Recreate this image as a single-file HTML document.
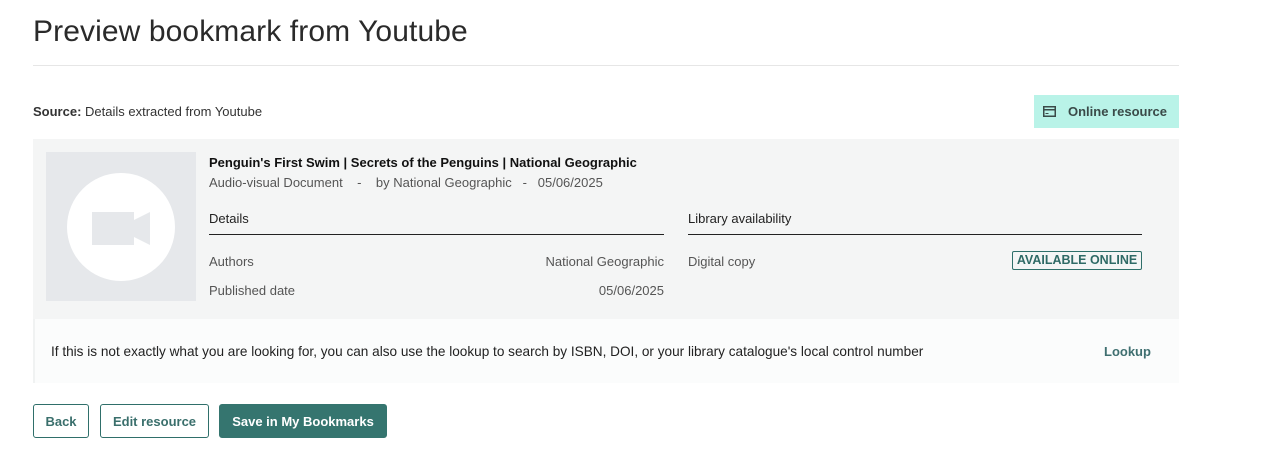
<!DOCTYPE html>
<html><head><style>
body{margin:0;width:1264px;height:473px;background:#fff;font-family:"Liberation Sans",sans-serif;color:#333;position:relative;overflow:hidden}
.a{position:absolute;white-space:nowrap}
h1{position:absolute;left:33px;top:15px;margin:0;font-weight:normal;font-size:30px;color:#2a2a2a;letter-spacing:0.1px}
.btn{position:absolute;top:404px;height:34px;box-sizing:border-box;border:1px solid #2f6f6a;border-radius:3px;color:#3a6f6c;font-size:13px;font-weight:bold;display:flex;align-items:center;justify-content:center}
</style></head><body>
<h1>Preview bookmark from Youtube</h1>
<div class="a" style="left:33px;top:65px;width:1146px;height:1px;background:#e6e6e6"></div>
<div class="a" style="left:33px;top:104px;font-size:13px;color:#333"><b>Source:</b> Details extracted from Youtube</div>
<div class="a" style="left:1034px;top:95px;width:145px;height:33px;background:#b9f3e8;font-size:13px;font-weight:bold;color:#3a4a48">
 <svg style="position:absolute;left:9px;top:11px" width="13" height="11" viewBox="0 0 13 11"><rect x="0.75" y="0.75" width="11.5" height="9.5" fill="none" stroke="#3a4a48" stroke-width="1.5"/><rect x="1" y="3" width="11" height="1.5" fill="#3a4a48"/><rect x="2.5" y="7" width="3" height="1" fill="#3a4a48"/></svg>
 <span style="position:absolute;left:34px;top:9px">Online resource</span></div>
<div class="a" style="left:33px;top:139px;width:1146px;height:180px;background:#f4f5f5"></div>
<div class="a" style="left:46px;top:152px;width:150px;height:149px;background:#e6e8eb">
 <div class="a" style="left:21px;top:21px;width:108px;height:108px;border-radius:50%;background:#fff"></div>
 <div class="a" style="left:46px;top:60px;width:42px;height:33px;background:#e6e8eb"></div>
 <svg class="a" style="left:84px;top:60px" width="20" height="33"><polygon points="0,10 20,0 20,33 0,23" fill="#e6e8eb"/></svg>
</div>
<div class="a" style="left:209px;top:155px;font-size:13px;font-weight:bold;color:#111">Penguin's First Swim | Secrets of the Penguins | National Geographic</div>
<div class="a" style="left:209px;top:175px;font-size:13px;color:#555">Audio-visual Document &nbsp;&nbsp; - &nbsp;&nbsp; by National Geographic &nbsp; - &nbsp; 05/06/2025</div>
<div class="a" style="left:209px;top:211px;font-size:13px;color:#222">Details</div>
<div class="a" style="left:209px;top:234px;width:455px;height:1px;background:#222"></div>
<div class="a" style="left:688px;top:211px;font-size:13px;color:#222">Library availability</div>
<div class="a" style="left:688px;top:234px;width:454px;height:1px;background:#222"></div>
<div class="a" style="left:209px;top:254px;font-size:13px;color:#555">Authors</div>
<div class="a" style="left:209px;top:283px;font-size:13px;color:#555">Published date</div>
<div class="a" style="left:464px;width:200px;text-align:right;top:254px;font-size:13px;color:#555">National Geographic</div>
<div class="a" style="left:464px;width:200px;text-align:right;top:283px;font-size:13px;color:#555">05/06/2025</div>
<div class="a" style="left:688px;top:254px;font-size:13px;color:#555">Digital copy</div>
<div class="a" style="left:1012px;top:251px;width:130px;height:19px;box-sizing:border-box;border:1px solid #2f6f6a;border-radius:2px;font-size:12.5px;font-weight:bold;color:#2f6a66;text-align:center;line-height:17px">AVAILABLE ONLINE</div>
<div class="a" style="left:33px;top:319px;width:1146px;height:64px;background:#fbfcfc;border-left:2px solid #f0f2f2;box-sizing:border-box"></div>
<div class="a" style="left:51px;top:344px;font-size:13.6px;color:#222">If this is not exactly what you are looking for, you can also use the lookup to search by ISBN, DOI, or your library catalogue's local control number</div>
<div class="a" style="left:1104px;top:344px;font-size:13px;font-weight:bold;color:#3f6f70">Lookup</div>
<div class="btn" style="left:33px;width:56px">Back</div>
<div class="btn" style="left:100px;width:109px">Edit resource</div>
<div class="btn" style="left:219px;width:168px;background:#35756f;border-color:#35756f;color:#fff">Save in My Bookmarks</div>
</body></html>
